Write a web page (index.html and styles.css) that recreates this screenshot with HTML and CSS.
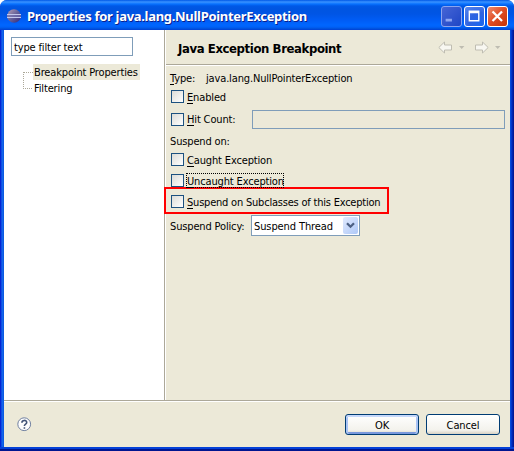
FILE: index.html
```
<!DOCTYPE html>
<html lang="en">
<head>
<meta charset="utf-8">
<title>Properties for java.lang.NullPointerException</title>
<link rel="stylesheet" href="styles.css">
</head>
<body>
<div class="window">
  <header class="titlebar">
    <svg class="logo" width="16" height="16" viewBox="0 0 16 16">
      <defs><linearGradient id="ball" x1="0" y1="0" x2="1" y2="1"><stop offset="0" stop-color="#b9a0b5"/><stop offset=".5" stop-color="#65629a"/><stop offset="1" stop-color="#30247a"/></linearGradient></defs>
      <circle cx="8" cy="8" r="6.8" fill="url(#ball)"/>
      <path d="M1 6.5h14M1 9.5h14" stroke="#c3c8ee"/><path d="M1 8h14" stroke="#7977b5"/>
    </svg>
    <h1 class="caption">Properties for java.lang.NullPointerException</h1>
    <div class="controls">
      <svg class="control minimize" width="21" height="21" viewBox="0 0 21 21"><path d="M4 13h7v3H4z" fill="#8ea6f2"/></svg>
      <svg class="control maximize" width="21" height="21" viewBox="0 0 21 21"><path d="M4 4h12v12H4zM5.500 7v7.500h9V7z" fill="#fff" fill-rule="evenodd"/></svg>
      <svg class="control close" width="21" height="21" viewBox="0 0 21 21"><path d="M5 5l10.500 10.500M15.500 5L5 15.500" stroke="#fff" stroke-width="2.500"/></svg>
    </div>
  </header>
  <main class="content">
    <nav class="sidebar">
      <div class="filter"><span>type filter text</span></div>
      <div class="tree">
        <svg width="10" height="24" viewBox="0 0 10 24"><path d="M1 .5h9M0 16.5h10M.5 0v17" fill="none" stroke="#aca899" stroke-dasharray="1 1"/></svg>
        <ul>
          <li class="selected"><span>Breakpoint Properties</span></li>
          <li><span>Filtering</span></li>
        </ul>
      </div>
    </nav>
    <section class="page">
      <div class="heading">
        <h2>Java Exception Breakpoint</h2>
        <svg class="nav" width="64" height="14" viewBox="0 0 64 14">
          <path d="M.8 6.5 6.5 1v3h7v5h-7v3z M50.2 6.5 44.5 1v3h-7v5h7v3z" fill="#f8f7f1" stroke="#bfbdb2"/>
          <path d="M21 5h5.4L23.7 8zM57 5h5.4L59.7 8z" fill="#bfbdb2"/>
        </svg>
      </div>
      <div class="form">
        <p class="type"><span class="type-label"><u>T</u>ype:</span><span>java.lang.NullPointerException</span></p>
        <label class="row enabled"><i class="box"></i><span><u>E</u>nabled</span></label>
        <label class="row hits"><i class="box"></i><span class="hit-label"><u>H</u>it Count:</span><i class="input"></i></label>
        <p class="group"><span>Suspend on:</span></p>
        <label class="row caught"><i class="box"></i><span><u>C</u>aught Exception</span></label>
        <label class="row uncaught"><i class="box"></i><span class="focus"><u>U</u>ncaught Exception</span></label>
        <label class="row subclasses"><i class="box"></i><span><u>S</u>uspend on Subclasses of this Exception</span></label>
        <div class="row policy"><span class="policy-label">Suspend Policy:</span>
          <div class="select"><span>Suspend Thread</span>
            <svg width="15" height="17" viewBox="0 0 15 17"><path d="M4 6.2 7.5 9.7 11 6.2" fill="none" stroke="#4d6185" stroke-width="2.3"/></svg>
          </div>
        </div>
      </div>
    </section>
  </main>
  <footer class="footer">
    <svg class="help" width="15" height="15" viewBox="0 0 15 15"><circle cx="7.2" cy="7.2" r="6.4" fill="#fdfdfd" stroke="#6f7f9f"/><path d="M4.9 5.7c0-3 4.8-3 4.8-.2 0 1.700-2.300 1.500-2.300 3.400M7.400 10.200v1.600" fill="none" stroke="#425477" stroke-width="1.6"/></svg>
    <button class="button ok"><span>OK</span></button>
    <button class="button"><span>Cancel</span></button>
  </footer>
</div>
</body>
</html>
```
FILE: styles.css
```
* { box-sizing: border-box; }
body { margin: 0; background: #fff; }
.window {
  width: 514px; height: 451px; display: flex; flex-direction: column;
  padding: 0 4px 4px; border-radius: 7px 7px 0 0; overflow: hidden;
  font: 11px/14px "DejaVu Sans Condensed", "DejaVu Sans", sans-serif; color: #000; letter-spacing: -.15px;
  background: linear-gradient(90deg, #0019cf 0, #0831d9 1px, #166aee 2px, #0855dd 4px, #0855dd 510px, #003dd9 511px, #001ea0 513px, #00138c);
  box-shadow: inset 0 -2px #001590, inset 0 -4px #0441d8;
}
h1, h2, p, ul { margin: 0; padding: 0; list-style: none; }
span { white-space: nowrap; }
u { text-decoration: none; box-shadow: 0 -1px #000 inset; }
i { display: block; }
.titlebar {
  height: 30px; flex: none; margin: 0 -4px; padding: 6px 6px 0 6px; display: flex; align-items: flex-start;
  background: linear-gradient(#0058e6 0, #3a93ff 2px, #0872ff 4px, #0058e6 6px, #0055e1 9px, #0055e5 14px, #005cf5 20px, #0066ff 25px, #0061f8 27px, #004fd9 29px, #003dd7);
}
.logo { margin-top: 2px; }
.caption { margin-left: 5px; flex: 1; white-space: nowrap; font: bold 13px/21px "Noto Sans", sans-serif; color: #fff; text-shadow: 1px 1px #0b1f8c; letter-spacing: -.3px; }
.controls { display: flex; gap: 2px; }
.control { border: 1px solid #fff; border-radius: 3px; background: radial-gradient(circle at 80% 90%, #1c66ee, #2f63e0 50%, #5c8af0); }
.control.minimize { border-color: #8ba4ee; background: linear-gradient(135deg, #4565d6, #1f46c5); }
.control.close { background: linear-gradient(135deg, #ef8b6d, #df4b22 50%, #c63305); }
.content { flex: none; height: 370px; display: flex; }
.sidebar { width: 161px; background: #fff; border-right: 1px solid #aca899; padding: 7px 0 0 7px; }
.filter { width: 122px; height: 19px; border: 1px solid #7f9db9; padding: 2px; line-height: 15px; }
.tree { display: flex; margin: 8px 0 0 12px; }
.tree svg { margin-top: 8px; }
.tree li { height: 16px; line-height: 17px; padding-left: 1px; }
.tree .selected { width: 107px; background: #ece9d8; }
.page { flex: 1; background: #ece9d8; border-left: 1px solid #fff; }
.heading { height: 36px; border-bottom: 1px solid #fff; box-shadow: inset 0 -1px #aca899; display: flex; justify-content: space-between; padding: 10px 8px 0 12px; }
h2 { font: bold 13px/17px "DejaVu Sans Condensed", sans-serif; letter-spacing: -.4px; white-space: nowrap; }
.nav { margin-top: 1px; }
.form { padding: 5px 0 0 4px; }
.type { height: 14px; line-height: 15px; display: flex; }
.type-label { width: 36px; }
.row { display: flex; align-items: center; height: 15px; }
.box { width: 13px; height: 13px; margin: 0 3px 0 1px; flex: none; border: 1px solid #1c5180; background: linear-gradient(135deg, #dcdcd7, #fff); }
.enabled { height: 13px; margin-top: 5px; }
.hits { height: 19px; margin-top: 7px; }
.hits .box { margin-top: -1px; }
.hit-label { width: 65px; }
.input { width: 253px; height: 19px; border: 1px solid #7f9db9; }
.group { margin-top: 5px; height: 14px; line-height: 15px; }
.caught { margin-top: 4px; }
.enabled span, .caught span, .subclasses span, .policy-label { margin-top: 2px; }
.uncaught { margin-top: 6px; }
.focus { height: 15px; line-height: 17px; outline: 1px dotted #000; outline-offset: -1px; margin-left: -1px; padding: 0 1px; width: 98px; }
.subclasses { width: 225px; height: 27px; margin: -1px 0 0 -6px; border: 2px solid #f00; padding: 2px 0 0 4px; letter-spacing: -.21px; }
.policy { height: 21px; margin-top: 1px; }
.policy-label { width: 81px; }
.select { width: 109px; height: 21px; border: 1px solid #7f9db9; background: #fff; display: flex; justify-content: space-between; align-items: center; padding: 0 1px 0 2px; letter-spacing: -.1px; }
.select span { margin-top: 2px; }
.select svg { background: linear-gradient(135deg, #e1eafe, #aec8f7); border-radius: 2px; }
.footer { flex: 1; border-top: 1px solid #aca899; box-shadow: inset 0 1px #fff; background: #ece9d8; display: flex; padding: 13px 10px 0 12px; }
.help { margin: 3px auto 0 1px; }
.button { width: 74px; height: 21px; margin-left: 7px; padding: 0; border: 1px solid #003c74; border-radius: 3px; background: linear-gradient(#fff, #f3f2ec 80%, #d8d2c4); font: inherit; line-height: 21px; letter-spacing: -.12px; color: #000; }
.button.ok { box-shadow: inset 0 2px #c6d8fb, inset 2px 0 #a9c3f4, inset -2px 0 #a9c3f4, inset 0 -2px #7998dc; }
```
